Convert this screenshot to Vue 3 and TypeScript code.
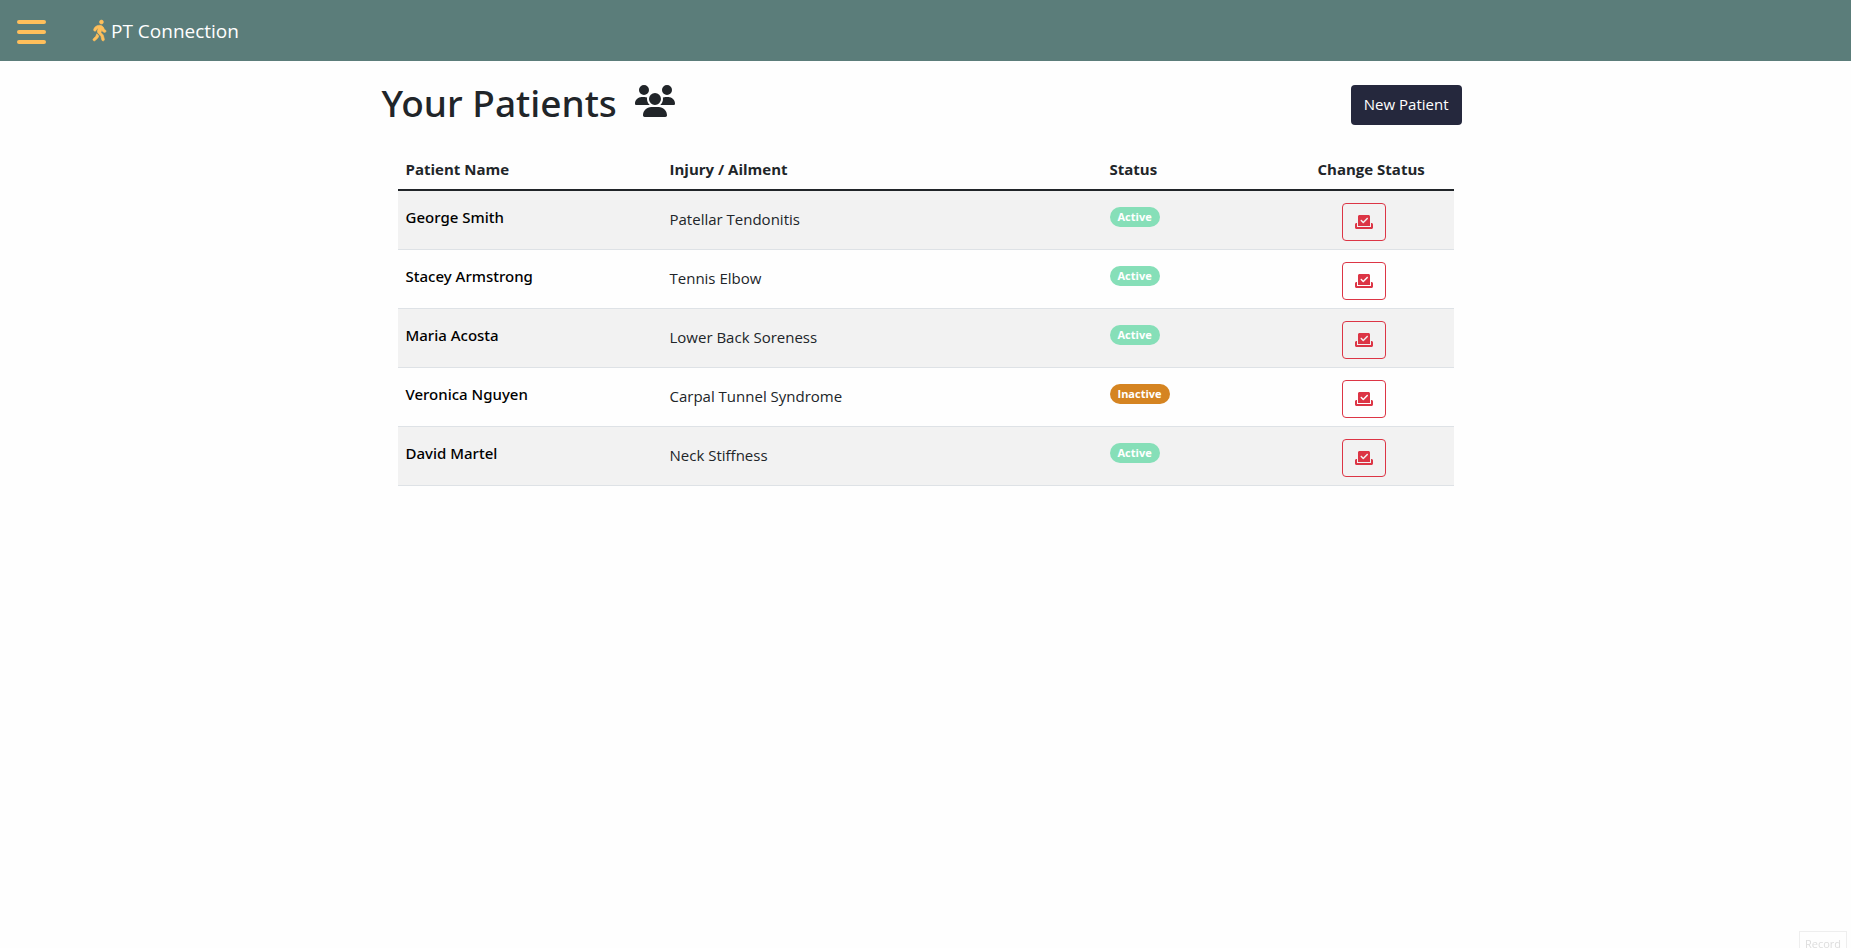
<script setup lang="ts">
interface Patient {
  name: string
  injury: string
  active: boolean
}

const patients: Patient[] = [
  { name: 'George Smith', injury: 'Patellar Tendonitis', active: true },
  { name: 'Stacey Armstrong', injury: 'Tennis Elbow', active: true },
  { name: 'Maria Acosta', injury: 'Lower Back Soreness', active: true },
  { name: 'Veronica Nguyen', injury: 'Carpal Tunnel Syndrome', active: false },
  { name: 'David Martel', injury: 'Neck Stiffness', active: true },
]
</script>

<template>
  <div class="page">
    <header class="navbar">
      <button class="menu" type="button" aria-label="Menu">
        <svg viewBox="0 0 29 24" width="29" height="24" aria-hidden="true">
          <rect width="29" height="4" rx="2" />
          <rect y="10" width="29" height="4" rx="2" />
          <rect y="20" width="29" height="4" rx="2" />
        </svg>
      </button>
      <a class="brand" href="#">
        <svg viewBox="0 0 320 512" width="13" height="21" aria-hidden="true">
          <circle cx="208" cy="48" r="48" />
          <path d="M123.700 200.500c1-.4 1.900-.8 2.900-1.200l-16.900 63.500c-5.600 21.100-.1 43.600 14.700 59.700l70.700 77.100 22 88.100c4.300 17.100 21.700 27.600 38.800 23.300s27.600-21.700 23.300-38.800l-23-92.100c-1.900-7.800-5.800-14.900-11.200-20.800l-49.500-54 19.300-65.500 9.600 23c4.400 10.600 12.500 19.300 22.800 24.500l26.700 13.300c15.800 7.900 35 1.500 42.900-14.300s1.500-35-14.300-42.900L281 232.700l-15.300-36.800C248.500 154.800 208.300 128 163.700 128c-22.800 0-45.300 4.800-66.100 14l-8 3.500c-32.900 14.600-58.100 42.400-69.400 76.500l-2.600 7.800c-5.600 16.800 3.500 34.900 20.200 40.500s34.900-3.500 40.500-20.200l2.600-7.800c5.700-17.100 18.300-30.900 34.700-38.200l8-3.500zM93.700 335.600L68.700 398 9.400 457.400c-12.500 12.500-12.500 32.800 0 45.300s32.800 12.500 45.300 0l62.300-62.300c4-4 7.100-8.700 9.200-13.900L141 389l-47.300-53.400z" />
        </svg>
        <span>PT Connection</span>
      </a>
    </header>

    <main class="content">
      <div class="heading">
        <h1>
          Your Patients
          <svg viewBox="0 0 640 512" width="40" height="32" aria-hidden="true">
            <path d="M144 0a80 80 0 1 1 0 160A80 80 0 1 1 144 0zM512 0a80 80 0 1 1 0 160A80 80 0 1 1 512 0zM0 298.700C0 239.800 47.800 192 106.700 192h42.700c15.900 0 31 3.500 44.600 9.700c-1.300 7.200-1.900 14.700-1.900 22.300c0 38.200 16.800 72.500 43.300 96H21.300C9.600 320 0 310.400 0 298.700zM404.600 320c26.600-23.500 43.300-57.800 43.300-96c0-7.600-.7-15-1.900-22.300c13.600-6.300 28.700-9.700 44.600-9.700h42.700C592.200 192 640 239.800 640 298.700c0 11.800-9.600 21.300-21.300 21.300H404.600zM224 224a96 96 0 1 1 192 0 96 96 0 1 1 -192 0zM128 485.300C128 411.700 187.700 352 261.300 352H378.700C452.300 352 512 411.700 512 485.300c0 14.700-11.900 26.700-26.700 26.700H154.700c-14.700 0-26.700-11.900-26.700-26.700z" />
          </svg>
        </h1>
        <button class="new-patient" type="button">New Patient</button>
      </div>

      <table class="patients">
        <colgroup>
          <col class="col-name" />
          <col />
          <col class="col-status" />
          <col class="col-change" />
        </colgroup>
        <thead>
          <tr>
            <th scope="col">Patient Name</th>
            <th scope="col">Injury / Ailment</th>
            <th scope="col">Status</th>
            <th scope="col">Change Status</th>
          </tr>
        </thead>
        <tbody>
          <tr v-for="patient in patients" :key="patient.name">
            <td><a class="name" href="#">{{ patient.name }}</a></td>
            <td class="injury">{{ patient.injury }}</td>
            <td>
              <span class="badge" :class="{ inactive: !patient.active }">{{ patient.active ? 'Active' : 'Inactive' }}</span>
            </td>
            <td class="change">
              <button class="toggle" type="button" :aria-label="`Change status of ${patient.name}`">
                <svg viewBox="0 0 576 512" width="18" height="16" aria-hidden="true">
                  <path d="M96 80c0-26.500 21.500-48 48-48H432c26.500 0 48 21.500 48 48V384H96V80zm313 47c-9.400-9.400-24.600-9.400-33.900 0l-111 111-47-47c-9.400-9.400-24.600-9.400-33.900 0s-9.400 24.600 0 33.900l64 64c9.400 9.400 24.600 9.400 33.900 0L409 161c9.400-9.400 9.400-24.600 0-33.900zM0 336c0-26.500 21.500-48 48-48H64V416H512V288h16c26.500 0 48 21.500 48 48v96c0 26.500-21.500 48-48 48H48c-26.500 0-48-21.500-48-48V336z" />
                </svg>
              </button>
            </td>
          </tr>
        </tbody>
      </table>
    </main>

    <button class="record" type="button">Record</button>
  </div>
</template>

<style>
body {
  margin: 0;
  background: #fefefe;
}
</style>

<style scoped>
.page {
  font-family: "Open Sans", "Noto Sans", sans-serif;
  font-size: 15px;
  line-height: 24px;
  color: #212529;
}

button {
  font: inherit;
  cursor: pointer;
}

svg {
  fill: currentColor;
}

.navbar {
  display: flex;
  align-items: center;
  gap: 47px;
  height: 61px;
  padding: 0 17px;
  box-sizing: border-box;
  background: #5b7d7a;
}

.menu {
  display: flex;
  padding: 3px 0 0;
  border: 0;
  background: none;
  color: #ffbf5b;
}

.brand {
  display: flex;
  align-items: center;
  gap: 5px;
  font-size: 19px;
  color: #fff;
  text-decoration: none;
}

.brand svg {
  overflow: visible;
  color: #ffbf5b;
  stroke: currentColor;
  stroke-width: 16;
}

.content {
  max-width: 1088px;
  margin: 0 auto;
  padding: 16px 12px 0;
}

.heading {
  display: flex;
  align-items: flex-start;
  justify-content: space-between;
  height: 56px;
  padding-right: 8px;
}

h1 {
  display: flex;
  align-items: flex-start;
  gap: 18px;
  margin: 0;
  font-family: "Noto Sans", "Open Sans", sans-serif;
  font-size: 37px;
  font-weight: 500;
  line-height: 52px;
}

h1 svg {
  margin-top: 8px;
}

.new-patient {
  height: 40px;
  margin-top: 8px;
  padding: 0 13px 2px;
  border: 0;
  border-radius: 4px;
  background: #25283d;
  color: #fff;
}

.patients {
  width: calc(100% - 32px);
  margin: 16px 16px 0;
  table-layout: fixed;
  border-collapse: separate;
  border-spacing: 0;
}

.col-name {
  width: 25%;
}

.col-status {
  width: 208px;
}

.col-change {
  width: 144px;
}

th,
td {
  padding: 8px;
  text-align: left;
  vertical-align: top;
}

th {
  font-weight: 700;
  border-bottom: 2px solid #212529;
}

td {
  padding-top: 14px;
  border-bottom: 1px solid #dee2e6;
}

tbody tr:nth-child(odd) {
  background: #f2f2f2;
}

.name {
  font-family: "Noto Sans", "Open Sans", sans-serif;
  font-weight: 500;
  color: #000;
  text-decoration: none;
}

.injury {
  padding-top: 16px;
}

.badge {
  display: block;
  width: max-content;
  margin-top: 2px;
  padding: 0 8px;
  border-radius: 10px;
  background: #86dfb8;
  color: #fff;
  font-size: 11px;
  font-weight: 700;
  line-height: 20px;
}

.badge.inactive {
  background: #d58421;
}

.change {
  padding: 12px 8px 8px 32px;
}

.toggle {
  display: flex;
  align-items: center;
  justify-content: center;
  width: 44px;
  height: 38px;
  padding: 0;
  border: 1px solid #dc3545;
  border-radius: 4px;
  background: none;
  color: #dc3545;
}

.record {
  position: fixed;
  right: 4px;
  bottom: -9px;
  height: 26px;
  padding: 0 5px;
  border: 1px solid #eee;
  background: none;
  color: #ddd;
  font-size: 11px;
}
</style>
